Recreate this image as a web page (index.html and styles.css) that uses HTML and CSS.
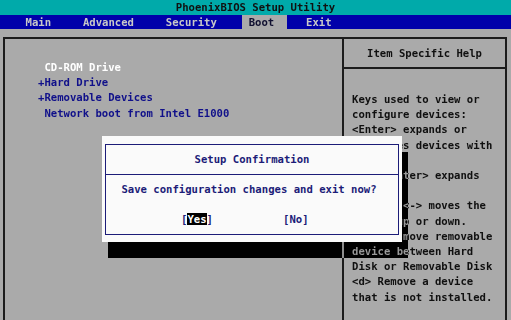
FILE: index.html
```html
<!DOCTYPE html>
<html>
<head>
  <meta charset="UTF-8">
  <title>PhoenixBIOS Setup Utility</title>
  <link rel="stylesheet" href="styles.css">
</head>
<body>

  <div class="title-bar">PhoenixBIOS Setup Utility</div>

  <div class="menu-bar">
    <span class="menu-item">Main</span>
    <span class="menu-item">Advanced</span>
    <span class="menu-item">Security</span>
    <span class="menu-item active">Boot</span>
    <span class="menu-item">Exit</span>
  </div>

  <div class="frame">
    <div class="boot-list">
      <p class="boot-item selected">CD-ROM Drive</p>
      <p class="boot-item group">+Hard Drive</p>
      <p class="boot-item group">+Removable Devices</p>
      <p class="boot-item">Network boot from Intel E1000</p>
    </div>

    <div class="help-panel">
      <div class="help-header">Item Specific Help</div>
      <div class="help-text">
        <p>Keys used to view or</p>
        <p>configure devices:</p>
        <p>&lt;Enter&gt; expands or</p>
        <p>collapses devices with</p>
        <p>a + or -</p>
        <p>&lt;Ctrl+Enter&gt; expands</p>
        <p>all</p>
        <p>&lt;+&gt; and &lt;-&gt; moves the</p>
        <p>device up or down.</p>
        <p>&lt;n&gt; May move removable</p>
        <p>device between Hard</p>
        <p>Disk or Removable Disk</p>
        <p>&lt;d&gt; Remove a device</p>
        <p>that is not installed.</p>
      </div>
    </div>
  </div>

  <!-- shadow shows the text under it dimmed, like text mode -->
  <div class="dialog-shadow"></div>

  <div class="dialog">
    <div class="dialog-box">
      <div class="dialog-title">Setup Confirmation</div>
      <div class="dialog-body">
        <p class="dialog-message">Save configuration changes and exit now?</p>
        <div class="dialog-buttons">
          <span class="choice">[<span class="choice-on">Yes</span>]</span>
          <span class="choice no">[No]</span>
        </div>
      </div>
    </div>
  </div>

</body>
</html>
```

FILE: styles.css
```css
:root {
  --bios-gray: #aaaaaa;
  --bios-cyan: #00aaaa;
  --bios-blue: #0000aa;
  --menu-text: #c8c8c8;
  --line-color: #1c1c1c;
  --item-blue: #10108a;
  --dialog-bg: #fafafa;
  --dialog-blue: #1c1c78;
  --line-h: 15.2px;
}
* {
  box-sizing: border-box;
}
body {
  margin: 0;
  width: 511px;
  height: 320px;
  overflow: hidden;
  background-color: var(--bios-gray);
  font-family: "DejaVu Sans Mono", "Liberation Mono", monospace;
  font-size: 10.6px;
  font-weight: bold;
  color: #000;
  position: relative;
}
p {
  margin: 0;
  white-space: pre;
}
.title-bar {
  height: 15px;
  line-height: 15px;
  background-color: var(--bios-cyan);
  color: #101010;
  text-align: center;
}
.menu-bar {
  display: flex;
  height: 14px;
  line-height: 14px;
  background-color: var(--bios-blue);
  padding-left: 4ch;
}
.menu-item {
  color: var(--menu-text);
  margin-right: 5ch;
}
.menu-item:nth-child(3) {
  margin-right: 4ch;
}
.menu-item.active {
  background-color: var(--bios-gray);
  color: #101030;
  padding: 0 2ch 0 1ch;
  margin-right: 3ch;
}
.frame {
  display: flex;
  margin: 8px 4px 0 3px;
  height: 283px;
  border: 2px solid var(--line-color);
  border-bottom: none;
}
.boot-list {
  width: 337px;
  padding: 21px 0 0 33px;
  line-height: var(--line-h);
}
.boot-item {
  color: var(--item-blue);
  padding-left: 1ch;
}
.boot-item.group {
  padding-left: 0;
}
.boot-item.selected {
  color: #ffffff;
}
.help-panel {
  flex: 1;
  border-left: 2px solid var(--line-color);
}
.help-header {
  height: 30px;
  line-height: 28px;
  text-align: center;
  border-bottom: 2px solid var(--line-color);
  color: #101010;
}
.help-text {
  padding: 23px 0 0 8px;
  line-height: var(--line-h);
  color: #101010;
}
.dialog-shadow {
  position: absolute;
  left: 108px;
  top: 152px;
  width: 300px;
  height: 106px;
  background-color: var(--bios-gray);
  mix-blend-mode: difference;
}
.dialog {
  position: absolute;
  left: 102px;
  top: 136px;
  width: 300px;
  height: 106px;
  padding: 8px 3px 7px 3px;
  background-color: var(--dialog-bg);
  z-index: 2;
}
.dialog-box {
  height: 100%;
  border: 1.5px solid var(--dialog-blue);
  color: var(--dialog-blue);
}
.dialog-title {
  height: 30px;
  line-height: 29px;
  text-align: center;
  border-bottom: 1.5px solid var(--dialog-blue);
}
.dialog-body {
  padding-top: 7px;
  line-height: var(--line-h);
}
.dialog-message {
  text-align: center;
  padding-right: 6px;
}
.dialog-buttons {
  display: flex;
  margin-top: var(--line-h);
  padding-left: 75px;
  white-space: pre;
}
.choice.no {
  margin-left: 11ch;
}
.choice-on {
  background-color: #000;
  color: #fff;
}
```
